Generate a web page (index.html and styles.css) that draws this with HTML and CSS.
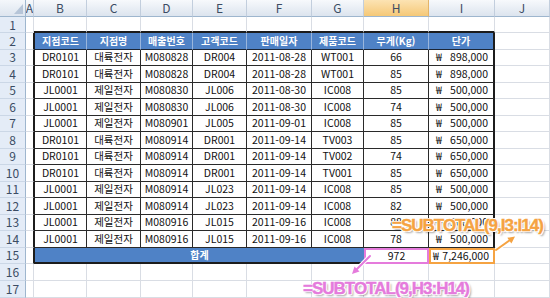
FILE: index.html
```html
<!DOCTYPE html>
<html lang="ko">
<head>
<meta charset="utf-8">
<link rel="stylesheet" href="styles.css">
</head>
<body>
<div class="sheet">
  <div class="r hd">
    <div class="corner"><span class="tri"></span></div>
    <div class="ch">A</div><div class="ch">B</div><div class="ch">C</div><div class="ch">D</div><div class="ch">E</div><div class="ch">F</div><div class="ch">G</div><div class="ch sel">H</div><div class="ch">I</div><div class="ch">J</div>
  </div>
  <div class="r r1">
    <div class="rn">1</div><div></div>
    <div class="top"></div><div class="top"></div><div class="top"></div><div class="top"></div><div class="top"></div><div class="top"></div><div class="top"></div><div class="top"></div><div></div>
  </div>
  <div class="r">
    <div class="rn">2</div><div class="edge"></div>
    <div class="th first">지점코드</div><div class="th">지점명</div><div class="th">매출번호</div><div class="th">고객코드</div><div class="th">판매일자</div><div class="th">제품코드</div><div class="th">무게(Kg)</div><div class="th lastc">단가</div><div></div>
  </div>
  <div class="r">
    <div class="rn">3</div><div class="edge"></div>
    <div class="tb first">DR0101</div><div class="tb ko">대륙전자</div><div class="tb">M080828</div><div class="tb">DR004</div><div class="tb">2011-08-28</div><div class="tb">WT001</div><div class="tb">66</div><div class="tb lastc won"><span>₩</span><span>898,000</span></div><div></div>
  </div>
  <div class="r">
    <div class="rn">4</div><div class="edge"></div>
    <div class="tb first">DR0101</div><div class="tb ko">대륙전자</div><div class="tb">M080828</div><div class="tb">DR004</div><div class="tb">2011-08-28</div><div class="tb">WT001</div><div class="tb">85</div><div class="tb lastc won"><span>₩</span><span>898,000</span></div><div></div>
  </div>
  <div class="r">
    <div class="rn">5</div><div class="edge"></div>
    <div class="tb first">JL0001</div><div class="tb ko">제일전자</div><div class="tb">M080830</div><div class="tb">JL006</div><div class="tb">2011-08-30</div><div class="tb">IC008</div><div class="tb">85</div><div class="tb lastc won"><span>₩</span><span>500,000</span></div><div></div>
  </div>
  <div class="r">
    <div class="rn">6</div><div class="edge"></div>
    <div class="tb first">JL0001</div><div class="tb ko">제일전자</div><div class="tb">M080830</div><div class="tb">JL006</div><div class="tb">2011-08-30</div><div class="tb">IC008</div><div class="tb">74</div><div class="tb lastc won"><span>₩</span><span>500,000</span></div><div></div>
  </div>
  <div class="r">
    <div class="rn">7</div><div class="edge"></div>
    <div class="tb first">JL0001</div><div class="tb ko">제일전자</div><div class="tb">M080901</div><div class="tb">JL005</div><div class="tb">2011-09-01</div><div class="tb">IC008</div><div class="tb">85</div><div class="tb lastc won"><span>₩</span><span>500,000</span></div><div></div>
  </div>
  <div class="r">
    <div class="rn">8</div><div class="edge"></div>
    <div class="tb first">DR0101</div><div class="tb ko">대륙전자</div><div class="tb">M080914</div><div class="tb">DR001</div><div class="tb">2011-09-14</div><div class="tb">TV003</div><div class="tb">85</div><div class="tb lastc won"><span>₩</span><span>650,000</span></div><div></div>
  </div>
  <div class="r">
    <div class="rn">9</div><div class="edge"></div>
    <div class="tb first">DR0101</div><div class="tb ko">대륙전자</div><div class="tb">M080914</div><div class="tb">DR001</div><div class="tb">2011-09-14</div><div class="tb">TV002</div><div class="tb">74</div><div class="tb lastc won"><span>₩</span><span>650,000</span></div><div></div>
  </div>
  <div class="r">
    <div class="rn">10</div><div class="edge"></div>
    <div class="tb first">DR0101</div><div class="tb ko">대륙전자</div><div class="tb">M080914</div><div class="tb">DR001</div><div class="tb">2011-09-14</div><div class="tb">TV001</div><div class="tb">85</div><div class="tb lastc won"><span>₩</span><span>650,000</span></div><div></div>
  </div>
  <div class="r">
    <div class="rn">11</div><div class="edge"></div>
    <div class="tb first">JL0001</div><div class="tb ko">제일전자</div><div class="tb">M080914</div><div class="tb">JL023</div><div class="tb">2011-09-14</div><div class="tb">IC008</div><div class="tb">85</div><div class="tb lastc won"><span>₩</span><span>500,000</span></div><div></div>
  </div>
  <div class="r">
    <div class="rn">12</div><div class="edge"></div>
    <div class="tb first">JL0001</div><div class="tb ko">제일전자</div><div class="tb">M080914</div><div class="tb">JL023</div><div class="tb">2011-09-14</div><div class="tb">IC008</div><div class="tb">82</div><div class="tb lastc won"><span>₩</span><span>500,000</span></div><div></div>
  </div>
  <div class="r">
    <div class="rn">13</div><div class="edge"></div>
    <div class="tb first">JL0001</div><div class="tb ko">제일전자</div><div class="tb">M080916</div><div class="tb">JL015</div><div class="tb">2011-09-16</div><div class="tb">IC008</div><div class="tb">88</div><div class="tb lastc won"><span>₩</span><span>500,000</span></div><div></div>
  </div>
  <div class="r">
    <div class="rn">14</div><div class="edge"></div>
    <div class="tb first">JL0001</div><div class="tb ko">제일전자</div><div class="tb">M080916</div><div class="tb">JL015</div><div class="tb">2011-09-16</div><div class="tb">IC008</div><div class="tb">78</div><div class="tb lastc won"><span>₩</span><span>500,000</span></div><div></div>
  </div>
  <div class="r">
    <div class="rn">15</div><div class="edge"></div>
    <div class="sum first">합계</div><div class="hsum">972</div><div class="isum won"><span>₩</span><span>7,246,000</span></div><div></div>
  </div>
  <div class="r r16">
    <div class="rn">16</div><div></div><div></div><div></div><div></div><div></div><div></div><div></div><div></div><div></div><div></div>
  </div>
  <div class="r r16">
    <div class="rn">17</div><div></div><div></div><div></div><div></div><div></div><div></div><div></div><div></div><div></div><div></div>
  </div>

  <svg class="arrows" width="550" height="298" viewBox="0 0 550 298">
    <g stroke="#fff" stroke-width="4" fill="#fff" stroke-linejoin="round">
      <line x1="370" y1="256" x2="356" y2="270"/>
      <polygon points="352,274 359.5,271.5 354.5,266.5"/>
      <line x1="496" y1="250" x2="510" y2="240"/>
      <polygon points="515,236.5 511.4,243.4 507.3,237.8"/>
    </g>
    <g stroke-width="2" stroke-linecap="round">
      <line x1="370" y1="256" x2="356" y2="270" stroke="#e57bdc"/>
      <polygon points="352,274 359.5,271.5 354.5,266.5" fill="#e57bdc" stroke="none"/>
      <line x1="496" y1="250" x2="510" y2="240" stroke="#f5a342"/>
      <polygon points="515,236.5 511.4,243.4 507.3,237.8" fill="#f5a342" stroke="none"/>
    </g>
  </svg>
  <div class="note orange">=SUBTOTAL(9,I3:I14)</div>
  <div class="note pink">=SUBTOTAL(9,H3:H14)</div>
</div>
</body>
</html>
```
FILE: styles.css
```css
html, body {
  margin: 0;
  padding: 0;
  background: #fff;
}

.sheet {
  position: relative;
  width: 550px;
  height: 298px;
  overflow: hidden;
  background: #fff;
  font-family: "Noto Sans CJK KR", "Liberation Sans", sans-serif;
  color: #111;
}

.r {
  display: grid;
  grid-template-columns: 26px 8px 53px 54px 52px 54px 65px 52px 65px 66px 55px;
  height: 16.5px;
}

.r.hd { height: 17px; }
.r.r1 { height: 16px; }
.r.r16 { height: 17px; }

.r > div {
  box-sizing: border-box;
  border-right: 1px solid #d9dde4;
  border-bottom: 1px solid #d9dde4;
  display: flex;
  align-items: center;
  justify-content: center;
  font-size: 10.5px;
  line-height: 1;
  white-space: nowrap;
  overflow: hidden;
}

.r > .corner {
  position: relative;
  background: linear-gradient(#f4f7fb, #dde5ef);
  border-right: 1px solid #9eb6ce;
  border-bottom: 1px solid #9eb6ce;
}

.tri {
  position: absolute;
  right: 2px;
  bottom: 2px;
  width: 0;
  height: 0;
  border-left: 9px solid transparent;
  border-bottom: 10px solid #b6c5d8;
}

.r > .ch {
  background: linear-gradient(#f7f9fc, #dce4ee);
  border-right: 1px solid #c2cedd;
  border-bottom: 1px solid #9eb6ce;
  color: #3b4c64;
  font-size: 12px;
}

.r > .ch.sel {
  background: linear-gradient(#fce3b3, #f5c877);
  border-right-color: #e4b468;
}

.r > .rn {
  background: #e4ecf7;
  border-right: 1px solid #9eb6ce;
  border-bottom: 1px solid #cbd7e6;
  color: #3b4c64;
  font-size: 12px;
}

.r > .top {
  border-bottom: 2px solid #1c1c1c;
}

.r > .edge {
  border-right: 1px solid #1c1c1c;
}

.r > .first {
  border-left: 1px solid #1c1c1c;
}

.r > .th {
  background: #4f82c6;
  color: #fff;
  font-weight: bold;
  font-size: 10px;
  border-right: 1px solid #9ab6dd;
  border-bottom: 1px solid #1c2636;
}

.r > .tb {
  border-right: 1px solid #2a2a2a;
  border-bottom: 1px solid #2a2a2a;
}

.r > .ko {
  font-size: 10.5px;
}

.r > .lastc {
  border-right: 2px solid #1c1c1c;
}

.r > .won {
  justify-content: space-between;
  padding: 0 5px 0 7px;
}

.r > .sum {
  grid-column: span 6;
  background: #4f82c6;
  color: #fff;
  font-weight: bold;
  font-size: 10px;
  border-right: 0;
  border-bottom: 2px solid #1c1c1c;
}

.r > .hsum {
  border: 2px solid #e57bdc;
}

.r > .isum {
  border: 2px solid #f5a342;
  padding: 0 4px 0 2px;
}

.arrows {
  position: absolute;
  left: 0;
  top: 0;
  pointer-events: none;
}

.note {
  position: absolute;
  font-family: "Liberation Sans", sans-serif;
  font-weight: bold;
  font-size: 17px;
  line-height: 17px;
  letter-spacing: -1px;
  white-space: nowrap;
  -webkit-text-stroke: 0.4px currentColor;
  text-shadow:
    1px 0 0 #fff, -1px 0 0 #fff, 0 1px 0 #fff, 0 -1px 0 #fff,
    1px 1px 0 #fff, -1px -1px 0 #fff, 1px -1px 0 #fff, -1px 1px 0 #fff,
    2px 2px 2px rgba(0, 0, 0, 0.35);
}

.note.orange {
  left: 392px;
  top: 217px;
  color: #f5a342;
}

.note.pink {
  left: 303px;
  top: 280px;
  color: #e57bdc;
}
```
